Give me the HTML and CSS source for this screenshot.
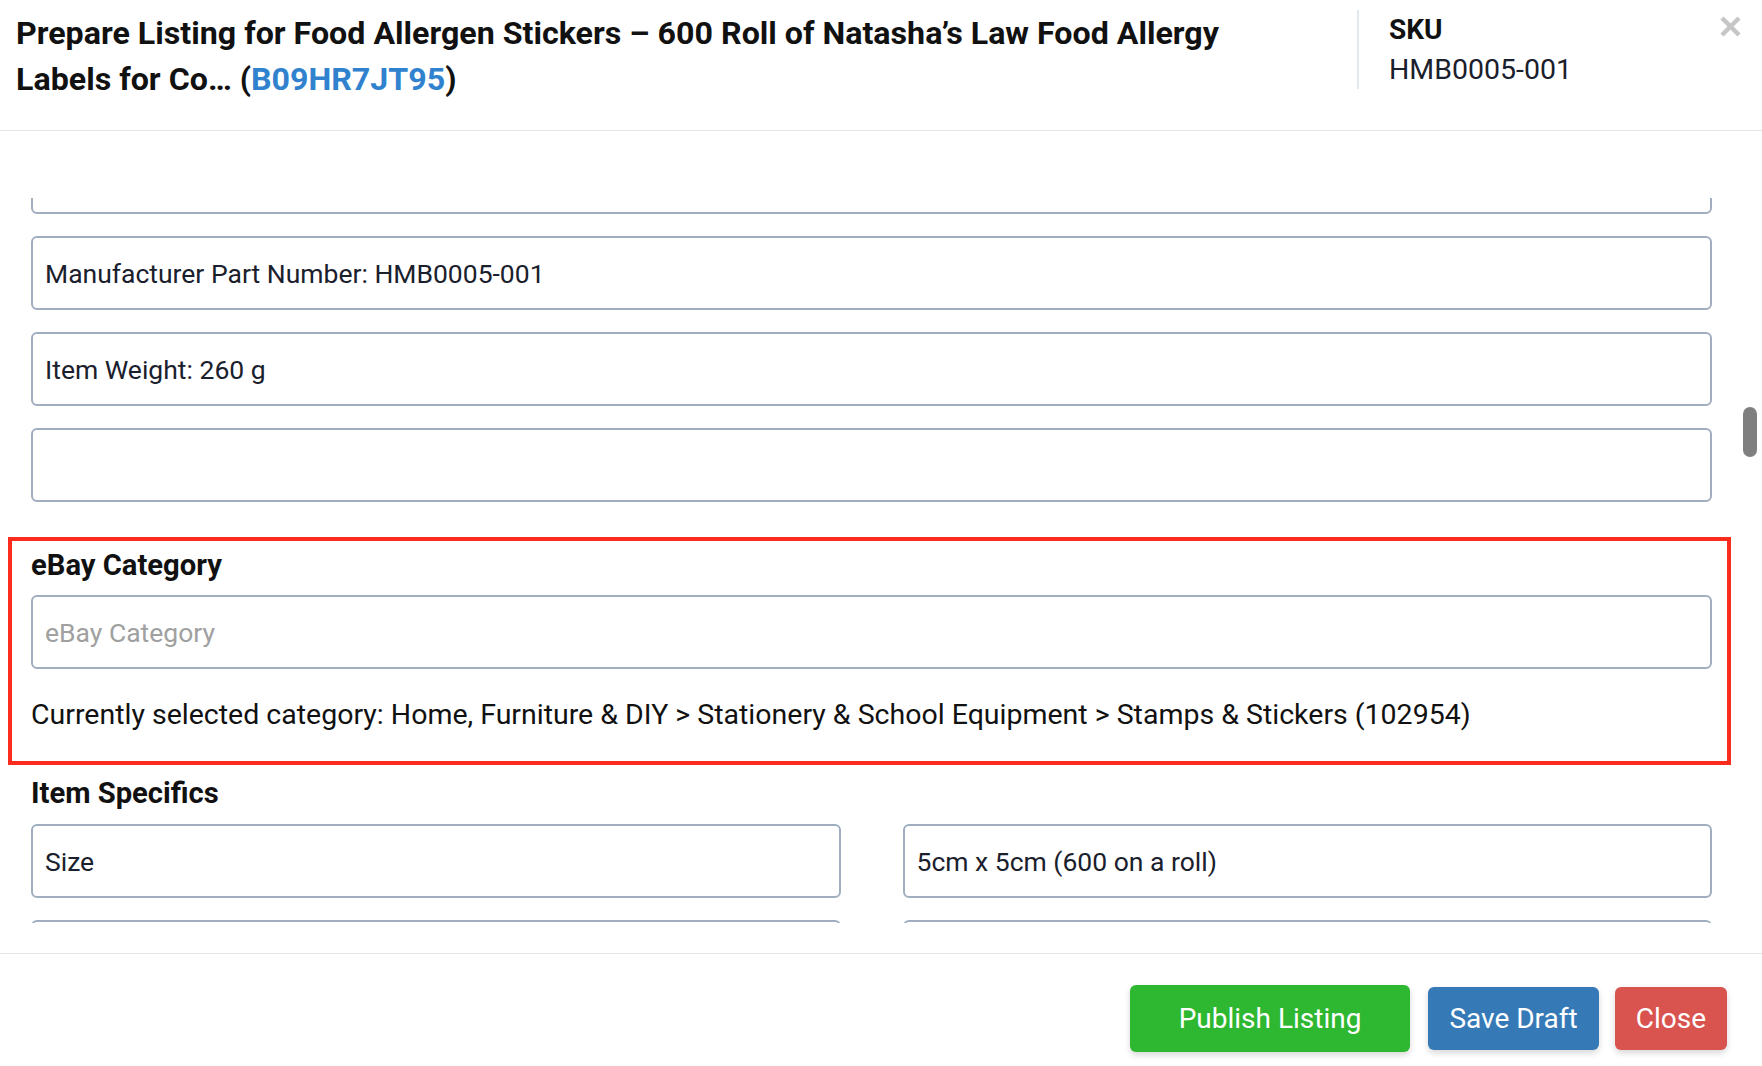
FILE: index.html
```html
<!DOCTYPE html>
<html>
<head>
    <title>Prepare Listing</title>
    <link rel="stylesheet" href="styles.css">
</head>
<body>
    <div class="modal">
        <div class="modal-header">
            <h1 class="modal-title">Prepare Listing for Food Allergen Stickers – 600 Roll of Natasha’s Law Food Allergy Labels for Co… (<a href="#">B09HR7JT95</a>)</h1>
            <div class="sku">
                <div class="sku-label">SKU</div>
                <div class="sku-value">HMB0005-001</div>
            </div>
            <button class="close-x" type="button" aria-label="Close">
                <svg width="23" height="21" viewBox="0 0 23 21">
                    <path d="M3 2 L20 19 M20 2 L3 19" stroke="#c6c6c6" stroke-width="4.5" fill="none"/>
                </svg>
            </button>
        </div>

        <div class="modal-body">
            <div class="scroll-area">
                <div class="fields">
                    <input class="field" type="text" value="" readonly>
                    <input class="field" type="text" value="Manufacturer Part Number: HMB0005-001" readonly>
                    <input class="field" type="text" value="Item Weight: 260 g" readonly>
                    <input class="field" type="text" value="" readonly>
                </div>

                <div class="category-box">
                    <label class="section-label" for="ebayCategory">eBay Category</label>
                    <input class="field" type="text" id="ebayCategory" placeholder="eBay Category">
                    <p class="current-category">Currently selected category: Home, Furniture &amp; DIY &gt; Stationery &amp; School Equipment &gt; Stamps &amp; Stickers (102954)</p>
                </div>

                <div class="section-label">Item Specifics</div>
                <div class="specifics">
                    <input class="field" type="text" value="Size" readonly>
                    <input class="field" type="text" value="5cm x 5cm (600 on a roll)" readonly>
                    <input class="field" type="text" value="" readonly>
                    <input class="field" type="text" value="" readonly>
                </div>
            </div>
            <div class="scroll-thumb"></div>
        </div>

        <div class="modal-footer">
            <button class="btn btn-publish" type="button">Publish Listing</button>
            <button class="btn btn-draft" type="button">Save Draft</button>
            <button class="btn btn-close" type="button">Close</button>
        </div>
    </div>
</body>
</html>
```

FILE: styles.css
```css
body {
    margin: 0;
    background-color: #fff;
    font-family: Roboto, "Noto Sans", sans-serif;
    color: #1a202c;
}

.modal {
    width: 1762px;
    height: 1066px;
    display: flex;
    flex-direction: column;
    overflow: hidden;
}

/* header */

.modal-header {
    display: flex;
    align-items: flex-start;
    height: 131px;
    box-sizing: border-box;
    padding: 10px 20px 0 16px;
    border-bottom: 1px solid #e4e4e4;
}

.modal-title {
    flex: none;
    width: 1341px;
    box-sizing: border-box;
    margin: 0;
    padding-right: 60px;
    font-size: 32.2px;
    line-height: 46px;
    font-weight: 700;
    color: #111;
}

.modal-title a {
    color: #3182ce;
    text-decoration: none;
}

.sku {
    flex: 1;
    height: 79px;
    box-sizing: border-box;
    padding: 2px 0 0 30px;
    border-left: 2px solid #e2e8f0;
}

.sku-label {
    font-size: 28px;
    line-height: 36px;
    font-weight: 700;
    color: #111;
}

.sku-value {
    margin-top: 4px;
    font-size: 28.5px;
    line-height: 36px;
    color: #1a202c;
}

.close-x {
    margin-top: 6px;
    padding: 0;
    border: none;
    background: none;
    cursor: pointer;
}

.close-x svg {
    display: block;
}

/* body */

.modal-body {
    position: relative;
    height: 822px;
    box-sizing: border-box;
    padding: 67px 0 30px 0;
}

.scroll-area {
    height: 725px;
    box-sizing: border-box;
    padding: 0 50px 0 31px;
    overflow: hidden;
}

.field {
    display: block;
    width: 100%;
    height: 74px;
    box-sizing: border-box;
    padding: 0 12px;
    border: 2px solid #a0aec0;
    border-radius: 6px;
    background: #fff;
    font-family: inherit;
    font-size: 26.5px;
    color: #1a202c;
    outline: none;
}

.field::placeholder {
    color: #a0a0a0;
}

.fields {
    display: flex;
    flex-direction: column;
    gap: 22px;
    margin-top: -58px;
}

.category-box {
    margin: 35px -19px 0 -23px;
    padding: 6px 15px 28px 19px;
    border: 4px solid #fb2b1e;
}

.section-label {
    display: block;
    font-size: 29.2px;
    line-height: 37px;
    font-weight: 700;
    color: #111;
}

.category-box .field {
    margin-top: 11px;
}

.current-category {
    margin: 28px 0 0;
    font-size: 28.5px;
    line-height: 36px;
    color: #111;
}

.category-box + .section-label {
    margin-top: 10px;
}

.specifics {
    display: grid;
    grid-template-columns: 1fr 1fr;
    column-gap: 62px;
    row-gap: 22px;
    margin-top: 12px;
}

.scroll-thumb {
    position: absolute;
    top: 276px;
    right: 5px;
    width: 14px;
    height: 50px;
    border-radius: 7px;
    background-color: #7f7f7f;
}

/* footer */

.modal-footer {
    display: flex;
    justify-content: flex-end;
    align-items: center;
    gap: 16px;
    padding: 31px 35px 0 0;
    border-top: 1px solid #e4e4e4;
}

.btn {
    height: 63px;
    border: none;
    border-radius: 6px;
    font-family: inherit;
    font-size: 28px;
    color: #fff;
    cursor: pointer;
    box-shadow: 0 3px 6px rgba(0, 0, 0, 0.16);
}

.btn-publish {
    height: 67px;
    margin-right: 2px;
    padding: 0 49px;
    background-color: #2eb731;
}

.btn-draft {
    padding: 0 21px;
    background-color: #357ab7;
}

.btn-close {
    padding: 0 21px;
    background-color: #d9534f;
}
```
